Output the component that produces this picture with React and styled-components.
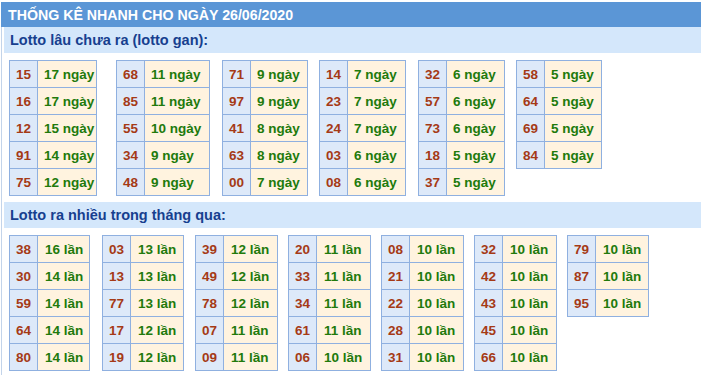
import styled, { createGlobalStyle } from 'styled-components';

const GlobalStyle = createGlobalStyle`
    body {
        margin: 0;
        background: #ffffff;
        font-family: "Liberation Sans", Arial, sans-serif;
    }
`

const Page = styled.div`
    padding: 2px 0 0 1px;
`
const Title = styled.div`
    height: 25px;
    line-height: 26px;
    padding-left: 7px;
    background-color: #5b96d6;
    color: #ffffff;
    font-size: 14.2px;
    font-weight: bold;
`
const Body = styled.div`
    border-left: 1px solid #c3d4ea;
    padding: 0 0 6px 2px;
`
const SectionTitle = styled.div`
    height: 26px;
    line-height: 27px;
    padding-left: 6px;
    background-color: #d4e7fb;
    color: #173f8f;
    font-size: 14.5px;
    font-weight: bold;
`
const Group = styled.div`
    display: grid;
    grid-template-columns: ${props => props.columns};
    align-items: start;
    padding: 7px 0 6px 5px;
`
const StatTable = styled.table`
    border-collapse: collapse;
    table-layout: fixed;
    width: ${props => props.width}px;
`
const NumCell = styled.td`
    width: 27px;
    height: 26px;
    padding: 0;
    border: 1px solid #8fb0e0;
    background-color: #dde9f9;
    color: #a53a16;
    font-size: 13.5px;
    font-weight: bold;
    text-align: center;
`
const ValueCell = styled.td`
    height: 26px;
    padding: 0 0 0 ${props => props.indent}px;
    border: 1px solid #8fb0e0;
    background-color: #fff3df;
    color: #217a0c;
    font-size: 13.5px;
    font-weight: bold;
    text-align: left;
    white-space: nowrap;
`

const ganTables = [
    { width: 88, rows: [['15', 17], ['16', 17], ['12', 15], ['91', 14], ['75', 12]] },
    { width: 94, rows: [['68', 11], ['85', 11], ['55', 10], ['34', 9], ['48', 9]] },
    { width: 86, rows: [['71', 9], ['97', 9], ['41', 8], ['63', 8], ['00', 7]] },
    { width: 87, rows: [['14', 7], ['23', 7], ['24', 7], ['03', 6], ['08', 6]] },
    { width: 87, rows: [['32', 6], ['57', 6], ['73', 6], ['18', 5], ['37', 5]] },
    { width: 86, rows: [['58', 5], ['64', 5], ['69', 5], ['84', 5]] },
]

const hotTables = [
    { width: 81, rows: [['38', 16], ['30', 14], ['59', 14], ['64', 14], ['80', 14]] },
    { width: 82, rows: [['03', 13], ['13', 13], ['77', 13], ['17', 12], ['19', 12]] },
    { width: 83, rows: [['39', 12], ['49', 12], ['78', 12], ['07', 11], ['09', 11]] },
    { width: 83, rows: [['20', 11], ['33', 11], ['34', 11], ['61', 11], ['06', 10]] },
    { width: 83, rows: [['08', 10], ['21', 10], ['22', 10], ['28', 10], ['31', 10]] },
    { width: 83, rows: [['32', 10], ['42', 10], ['43', 10], ['45', 10], ['66', 10]] },
    { width: 82, rows: [['79', 10], ['87', 10], ['95', 10]] },
]

function LottoTable({ width, rows, unit, indent }) {
    return (
        <StatTable width={width}>
            <tbody>
                {rows.map(([num, count]) => (
                    <tr key={num}>
                        <NumCell>{num}</NumCell>
                        <ValueCell indent={indent}>{count} {unit}</ValueCell>
                    </tr>
                ))}
            </tbody>
        </StatTable>
    )
}

function App() {
    return (
        <Page>
            <GlobalStyle />
            <Title>THỐNG KÊ NHANH CHO NGÀY 26/06/2020</Title>
            <Body>
                <SectionTitle>Lotto lâu chưa ra (lotto gan):</SectionTitle>
                <Group columns="107px 106px 97px 99px 98px 98px">
                    {ganTables.map((t, i) => (
                        <LottoTable key={i} width={t.width} rows={t.rows} unit="ngày" indent={6} />
                    ))}
                </Group>
                <SectionTitle>Lotto ra nhiều trong tháng qua:</SectionTitle>
                <Group columns="repeat(7, 93px)">
                    {hotTables.map((t, i) => (
                        <LottoTable key={i} width={t.width} rows={t.rows} unit="lần" indent={7} />
                    ))}
                </Group>
            </Body>
        </Page>
    )
}

export default App;
